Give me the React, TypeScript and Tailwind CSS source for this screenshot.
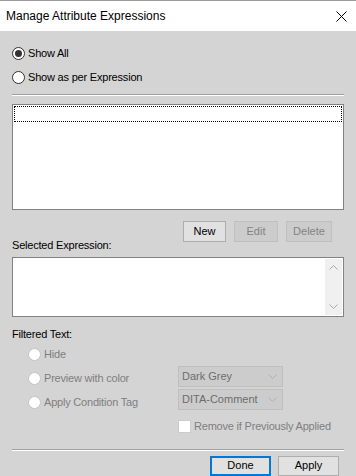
import React from "react";

const ui = { fontFamily: '"Liberation Sans", Arial, sans-serif' };

function Radio({ checked, disabled, label }: { checked?: boolean; disabled?: boolean; label: string }) {
  return (
    <div className="flex items-center h-[13px]">
      <div
        className={`w-[13px] h-[13px] rounded-full border flex items-center justify-center ${
          disabled ? "border-[#c4c4c4] bg-white" : "border-[#333333] bg-white"
        }`}
      >
        {checked && <div className="w-[7px] h-[7px] rounded-full bg-[#333333]" />}
      </div>
      <span
        className={`ml-[3px] text-[11px] leading-[13px] tracking-[-0.2px] ${disabled ? "text-[#7f7f7f]" : "text-black"}`}
      >
        {label}
      </span>
    </div>
  );
}

function Chevron({ up, color = "#a8a8a8" }: { up?: boolean; color?: string }) {
  return (
    <svg width="9" height="5" viewBox="0 0 9 5">
      <path d={up ? "M0.5 4.5 L4.5 0.5 L8.5 4.5" : "M0.5 0.5 L4.5 4.5 L8.5 0.5"} fill="none" stroke={color} strokeWidth="1" />
    </svg>
  );
}

function Combo({ label }: { label: string }) {
  return (
    <div className="w-[105px] h-[21px] bg-[#cccccc] border border-[#bfbfbf] flex items-center justify-between pl-[3px] pr-[5px]">
      <span className="text-[11px] text-[#6d6d6d]">{label}</span>
      <Chevron color="#b0b0b0" />
    </div>
  );
}

function Separator() {
  return (
    <div className="flex flex-col">
      <div className="h-px bg-[#a0a0a0]" />
      <div className="h-px bg-white" />
    </div>
  );
}

export default function App() {
  return (
    <div className="w-[356px] h-[476px] bg-[#d4d4d4] border-t border-[#9a9a9a] flex flex-col overflow-hidden" style={ui}>
      <div className="h-[30px] bg-white flex items-center justify-between pl-[6px] pr-[9px] shrink-0">
        <span className="text-[12px] text-black">Manage Attribute Expressions</span>
        <svg width="11" height="11" viewBox="0 0 11 11">
          <path d="M0.5 0.5 L10.5 10.5 M10.5 0.5 L0.5 10.5" stroke="#000" strokeWidth="1" />
        </svg>
      </div>

      <div className="flex flex-col px-[12px]">
        <div className="mt-[16px] flex flex-col gap-[11px]">
          <Radio checked label="Show All" />
          <Radio label="Show as per Expression" />
        </div>

        <div className="mt-[10px]">
          <Separator />
        </div>

        <div className="mt-[8px] h-[106px] bg-white border border-[#828282] p-px">
          <div className="h-[16px] border border-dotted border-black" />
        </div>

        <div className="mt-[11px] flex justify-end gap-[8px] pr-[12px]">
          <div className="w-[43px] h-[21px] bg-[#e1e1e1] border border-[#adadad] flex items-center justify-center text-[11px] text-black">
            New
          </div>
          <div className="w-[44px] h-[21px] bg-[#cccccc] border border-[#bfbfbf] flex items-center justify-center text-[11px] text-[#838383]">
            Edit
          </div>
          <div className="w-[46px] h-[21px] bg-[#cccccc] border border-[#bfbfbf] flex items-center justify-center text-[11px] text-[#838383]">
            Delete
          </div>
        </div>

        <div className="-mt-[3px] text-[11px] leading-[13px] tracking-[-0.2px] text-black">Selected Expression:</div>

        <div className="mt-[5px] h-[60px] bg-white border border-[#828282] flex justify-end p-px">
          <div className="w-[17px] bg-[#f0f0f0] flex flex-col justify-between items-center py-[6px]">
            <Chevron up />
            <Chevron />
          </div>
        </div>

        <div className="mt-[11px] text-[11px] leading-[13px] tracking-[-0.2px] text-black">Filtered Text:</div>

        <div className="mt-[7px] pl-[16px] flex flex-col">
          <Radio disabled label="Hide" />
          <div className="mt-[5px] flex">
            <div className="w-[150px] pt-[6px]">
              <Radio disabled label="Preview with color" />
            </div>
            <Combo label="Dark Grey" />
          </div>
          <div className="mt-[2px] flex">
            <div className="w-[150px] pt-[7px]">
              <Radio disabled label="Apply Condition Tag" />
            </div>
            <Combo label="DITA-Comment" />
          </div>
          <div className="mt-[8px] pl-[150px] flex items-center">
            <div className="w-[13px] h-[13px] bg-white border border-[#cccccc]" />
            <span className="ml-[3px] text-[11px] tracking-[-0.2px] text-[#7f7f7f]">Remove if Previously Applied</span>
          </div>
        </div>

        <div className="mt-[14px]">
          <Separator />
        </div>

        <div className="mt-[5px] flex justify-end gap-[7px] pr-[5px]">
          <div className="w-[61px] h-[20px] bg-[#e1e1e1] border-2 border-[#0078d7] flex items-center justify-center text-[11px] text-black">
            Done
          </div>
          <div className="w-[61px] h-[20px] bg-[#e1e1e1] border border-[#adadad] flex items-center justify-center text-[11px] text-black">
            Apply
          </div>
        </div>
      </div>
    </div>
  );
}
